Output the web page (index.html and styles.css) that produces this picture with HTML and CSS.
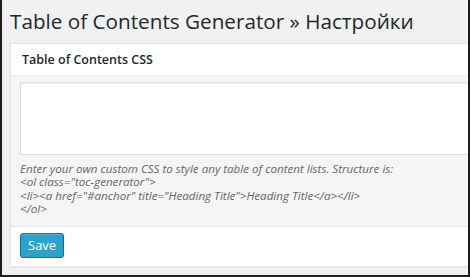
FILE: index.html
```html
<!DOCTYPE html>
<html lang="ru">
<head>
    <meta charset="UTF-8">
    <link rel="stylesheet" href="styles.css">
    <title>Table of Contents Generator » Настройки</title>
</head>
<body>
    <div class="wrap">
        <h1>Table of Contents Generator » Настройки</h1>
        <div class="postbox">
            <h3 class="hndle">Table of Contents CSS</h3>
            <div class="inside">
                <textarea class="css-field"></textarea>
                <p class="description">
                    Enter your own custom CSS to style any table of content lists. Structure is:<br>
                    &lt;ol class="toc-generator"&gt;<br>
                    &lt;li&gt;&lt;a href="#anchor" title="Heading Title"&gt;Heading Title&lt;/a&gt;&lt;/li&gt;<br>
                    &lt;/ol&gt;
                </p>
            </div>
            <div class="actions">
                <button class="button-primary">Save</button>
            </div>
        </div>
    </div>
</body>
</html>
```

FILE: styles.css
```css
html, body {
    height: 100%;
}

body {
    margin: 0;
    font-family: "Open Sans", sans-serif;
    background-color: #f1f1f1;
    color: #444;
    box-sizing: border-box;
    border-left: 2px solid #1e1e1e;
    border-right: 2px solid #1e1e1e;
    border-bottom: 2px solid #1e1e1e;
    overflow: hidden;
}

.wrap {
    padding: 6px 0 0 8px;
}

h1 {
    margin: 0 0 7px 0;
    font-size: 20.7px;
    font-weight: 400;
    line-height: 30px;
    color: #23282d;
}

.postbox {
    background-color: #fff;
    border: 1px solid #e5e5e5;
    border-right: none;
    box-shadow: 0 1px 1px rgba(0, 0, 0, 0.04);
}

.hndle {
    margin: 0;
    padding: 7px 11px;
    font-size: 12.5px;
    font-weight: 600;
    line-height: 17px;
    color: #23282d;
    border-bottom: 1px solid #eee;
}

.inside {
    background-color: #f5f5f5;
    padding: 6px 0 10px 9px;
    border-bottom: 1px solid #e5e5e5;
}

.css-field {
    display: block;
    box-sizing: border-box;
    width: 100%;
    height: 73px;
    margin: 0;
    border: 1px solid #ddd;
    border-right: none;
    background-color: #fff;
    box-shadow: inset 0 1px 2px rgba(0, 0, 0, 0.07);
    resize: none;
}

.description {
    margin: 7px 0 0 0;
    font-size: 11.6px;
    font-style: italic;
    line-height: 13.4px;
    color: #666;
}

.actions {
    padding: 6px 9px 8px 9px;
}

.button-primary {
    font-family: "Open Sans", sans-serif;
    font-size: 13px;
    height: 25px;
    padding: 0 7px;
    background-color: #2ea2cc;
    color: #fff;
    border: 1px solid #0074a2;
    border-radius: 3px;
    box-shadow: inset 0 1px 0 rgba(120, 200, 230, 0.5);
}
```
